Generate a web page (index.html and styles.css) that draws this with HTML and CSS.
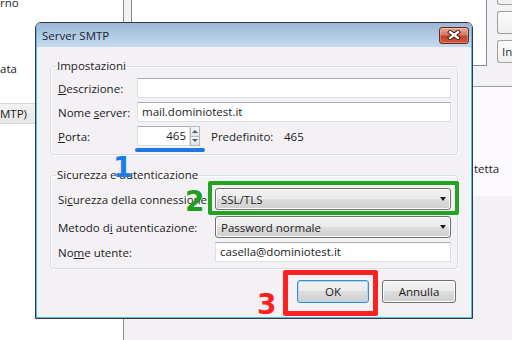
FILE: index.html
```html
<!DOCTYPE html>
<html lang="it">
<head>
<meta charset="utf-8">
<title>Server SMTP</title>
<link rel="stylesheet" href="styles.css">
</head>
<body>
<div class="app">
  <aside class="sidebar">
    <div class="tree-row first">rno</div>
    <div class="tree-row"></div>
    <div class="tree-row"></div>
    <div class="tree-row">ata</div>
    <div class="tree-row"></div>
    <div class="tree-row selected">MTP)</div>
  </aside>
  <div class="splitter"></div>
  <main class="main">
    <div class="top">
      <div class="top-panel"></div>
      <div class="side-buttons">
        <div class="side-btn"></div>
        <div class="side-btn"></div>
        <div class="side-btn">In</div>
      </div>
    </div>
    <div class="info-panel"><span>tetta</span></div>
  </main>
</div>

<div class="dialog">
  <div class="dialog-frame">
    <div class="titlebar">
      <span class="title">Server SMTP</span>
      <div class="close-btn">
        <svg width="14" height="10" viewBox="0 0 14 10">
          <path d="M3 2 L11 8 M11 2 L3 8" stroke="#4b1f18" stroke-width="4.2" stroke-linecap="square"/>
          <path d="M3 2 L11 8 M11 2 L3 8" stroke="#ffffff" stroke-width="2.2" stroke-linecap="square"/>
        </svg>
      </div>
    </div>
    <div class="dialog-body">
      <fieldset class="group group-settings">
        <legend>Impostazioni</legend>
        <div class="rows">
          <div class="row"><span class="lbl lbl-a"><u>D</u>escrizione:</span><div class="field"></div></div>
          <div class="row"><span class="lbl lbl-a">Nome <u>s</u>erver:</span><div class="field">mail.dominiotest.it</div></div>
          <div class="row">
            <span class="lbl lbl-a"><u>P</u>orta:</span>
            <div class="field port">465</div>
            <div class="spin">
              <div class="spin-btn"><span class="arr-up"></span></div>
              <div class="spin-btn"><span class="arr-down"></span></div>
            </div>
            <span class="default-label">Predefinito:</span>
            <span>465</span>
          </div>
        </div>
      </fieldset>

      <fieldset class="group group-auth">
        <legend>Sicurezza e autenticazione</legend>
        <div class="row tall"><span class="lbl lbl-b">Si<u>c</u>urezza della connessione:</span><div class="select"><span>SSL/TLS</span><span class="caret"></span></div></div>
        <div class="row tall gap6"><span class="lbl lbl-b">Metodo d<u>i</u> autenticazione:</span><div class="select"><span>Password normale</span><span class="caret"></span></div></div>
        <div class="row gap4"><span class="lbl lbl-b">No<u>m</u>e utente:</span><div class="field">casella@dominiotest.it</div></div>
      </fieldset>

      <div class="actions">
        <div class="btn btn-ok">OK</div>
        <div class="btn btn-cancel">Annulla</div>
      </div>
    </div>
  </div>
</div>

<div class="mark mark-line"></div>
<div class="mark mark-num n1">1</div>
<div class="mark mark-green"></div>
<div class="mark mark-num n2">2</div>
<div class="mark mark-red"></div>
<div class="mark mark-num n3">3</div>
</body>
</html>
```
FILE: styles.css
```css
* { box-sizing: border-box; }
html, body { margin: 0; padding: 0; }
body {
  width: 512px;
  height: 340px;
  overflow: hidden;
  position: relative;
  background: #f4f1f4;
  font-family: "Open Sans", "Noto Sans", sans-serif;
  font-size: 11.5px;
  color: #1b1b1b;
}

/* background application window */
.app { display: flex; height: 340px; }
.sidebar { width: 123px; flex: none; background: #fff; overflow: hidden; }
.tree-row { height: 22px; line-height: 22px; white-space: nowrap; }
.tree-row.first { margin-top: -8px; }
.tree-row.selected {
  height: 21px;
  margin-top: 1px;
  line-height: 19px;
  background: linear-gradient(#f3f3f3, #e6e6e6);
  border: 1px solid #d6d6d6;
  border-left: none;
}
.splitter { width: 8px; flex: none; border-left: 1px solid #8a8a96; background: #f4f1f4; }
.main { flex: 1; display: flex; flex-direction: column; }
.top { display: flex; height: 66px; }
.top-panel { flex: 1; background: #fff; border: 1px solid #8a8a96; border-top: none; }
.side-buttons {
  width: 25px;
  flex: none;
  padding-left: 10px;
  margin-top: -18px;
  display: flex;
  flex-direction: column;
  gap: 6px;
}
.side-btn {
  height: 23px;
  border: 1px solid #a0a0a0;
  border-right: none;
  border-radius: 3px 0 0 3px;
  background: linear-gradient(#fbfbfb, #f0eef0);
  padding-left: 4px;
  line-height: 21px;
  overflow: hidden;
  color: #333;
}
.info-panel {
  margin-top: 20px;
  height: 110px;
  border-top: 1px solid #a0a0a0;
  background: #fdfafd;
  padding-left: 343px;
  padding-top: 75px;
  line-height: 14px;
  white-space: nowrap;
}

/* dialog window */
.dialog {
  position: absolute;
  left: 35px;
  top: 22px;
  width: 438px;
  height: 297px;
  border: 1px solid #363a3f;
  border-radius: 6px 6px 0 0;
  background: #f4f1f4;
  overflow: hidden;
}
.dialog-frame {
  height: 100%;
  border: 1px solid #52bde8;
  border-top: none;
  display: flex;
  flex-direction: column;
}
.titlebar {
  height: 24px;
  flex: none;
  display: flex;
  align-items: center;
  justify-content: space-between;
  padding: 0 2px 0 5px;
  background: linear-gradient(#9bb6d4, #b3cce6 55%, #c4d9ef);
}
.title { color: #1a2430; font-size: 11.5px; }
.close-btn {
  width: 30px;
  height: 17px;
  border: 1px solid #6a2820;
  border-radius: 3px;
  background: linear-gradient(#e9aa98, #d57a63 45%, #c2432b 55%, #d0573c);
  display: flex;
  align-items: center;
  justify-content: center;
  box-shadow: inset 0 0 0 1px rgba(255,255,255,0.25);
}
.dialog-body { flex: 1; padding: 12px 13px 0; }

.group {
  margin: 0;
  padding: 5px 6px 8px 7px;
  min-width: 0;
  border: 1px solid #d5dfe5;
  border-radius: 3px;
  box-shadow: inset 1px 1px 0 #fff, 1px 1px 0 #fff;
}
.group legend { padding: 0 1px; margin-left: -2px; line-height: 14px; height: 14px; }
.group-auth { margin-top: 13px; padding-top: 6px; padding-bottom: 6px; }

.rows { display: flex; flex-direction: column; gap: 4px; }
.row { display: flex; align-items: center; height: 20px; white-space: nowrap; }
.row.tall { height: 22px; }
.row.gap6 { margin-top: 6px; }
.row.gap4 { margin-top: 4px; }
.lbl { flex: none; }
.lbl-a { width: 79px; }
.lbl-b { width: 157px; }
.field {
  flex: 1;
  height: 20px;
  background: #fff;
  border: 1px solid #dcdfe6;
  border-top-color: #abadb3;
  padding: 0 4px;
  line-height: 18px;
  overflow: hidden;
}
.field.port { flex: none; width: 53px; text-align: right; padding-right: 3px; }
.spin { width: 10px; height: 20px; display: flex; flex-direction: column; flex: none; }
.spin-btn {
  flex: 1;
  border: 1px solid #b8b8b8;
  background: linear-gradient(#f7f7f7, #e1e1e1);
  display: flex;
  align-items: center;
  justify-content: center;
}
.spin-btn + .spin-btn { border-top: none; }
.arr-up { width: 0; height: 0; border-left: 3px solid transparent; border-right: 3px solid transparent; border-bottom: 3px solid #4a5f87; }
.arr-down { width: 0; height: 0; border-left: 3px solid transparent; border-right: 3px solid transparent; border-top: 3px solid #4a5f87; }
.default-label { margin-left: 11px; width: 73px; }

.select {
  flex: 1;
  height: 22px;
  border: 1px solid #707070;
  border-radius: 3px;
  background: linear-gradient(#f2f2f2 0%, #ebebeb 50%, #dddddd 50%, #cfcfcf 100%);
  box-shadow: inset 0 0 0 1px #fbfbfb;
  display: flex;
  align-items: center;
  justify-content: space-between;
  padding: 0 4px 0 5px;
}
.caret { width: 0; height: 0; border-left: 3.5px solid transparent; border-right: 3.5px solid transparent; border-top: 4px solid #1b1b1b; }

.actions { display: flex; justify-content: flex-end; gap: 13px; margin-top: 11px; padding-right: 2px; }
.btn {
  height: 23px;
  border: 1px solid #707070;
  border-radius: 3px;
  background: linear-gradient(#f2f2f2 0%, #ebebeb 50%, #dddddd 50%, #cfcfcf 100%);
  box-shadow: inset 0 0 0 1px #fcfcfc;
  display: flex;
  align-items: center;
  justify-content: center;
}
.btn-ok { width: 72px; border-color: #3c8ccc; box-shadow: inset 0 0 0 1px #a6dcf6; }
.btn-cancel { width: 74px; }

/* annotation marks drawn over the screenshot */
.mark { position: absolute; }
.mark-line { left: 135px; top: 148px; width: 70px; height: 4px; border-radius: 2px; background: #1f78e0; }
.mark-num { font-family: "DejaVu Sans", sans-serif; font-weight: bold; font-size: 28px; line-height: 28px; }
.n1 { left: 113px; top: 154px; color: #1c7de6; }
.n2 { left: 185px; top: 188px; color: #1f9f1f; }
.n3 { left: 257px; top: 291px; color: #ff1f1f; }
.mark-green { left: 208px; top: 181px; width: 251px; height: 34px; border: 4px solid #22a322; border-radius: 2px; }
.mark-red { left: 283px; top: 270px; width: 95px; height: 46px; border: 5px solid #ff2020; border-radius: 2px; }
```
